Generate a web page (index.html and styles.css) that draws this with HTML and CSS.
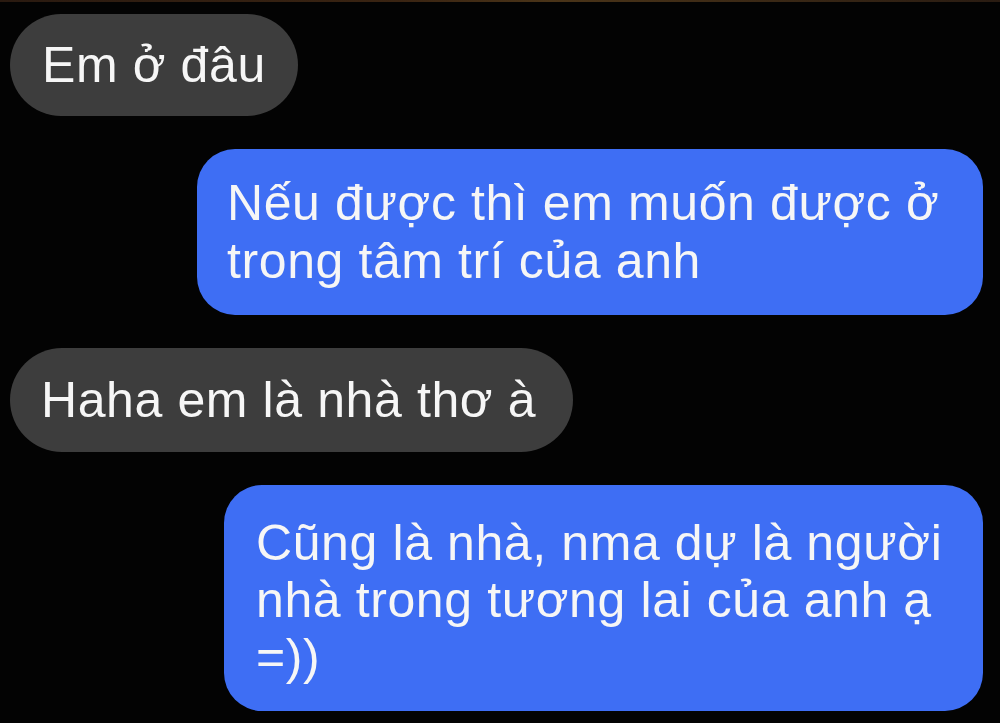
FILE: index.html
```html
<!DOCTYPE html>
<html lang="vi">
<head>
<meta charset="utf-8">
<title>Chat</title>
<link rel="stylesheet" href="styles.css">
</head>
<body>
<div class="topline"></div>
<main class="thread">
  <div class="bubble bubble--in bubble--short">Em ở đâu</div>
  <div class="bubble bubble--out bubble--w1">Nếu được thì em muốn được ở<br>trong tâm trí của anh</div>
  <div class="bubble bubble--in bubble--short2">Haha em là nhà thơ à</div>
  <div class="bubble bubble--out bubble--w2">Cũng là nhà, nma dự là người<br>nhà trong tương lai của anh ạ<br>=))</div>
</main>
</body>
</html>
```
FILE: styles.css
```css
html, body {
  margin: 0;
  padding: 0;
  background: #030303;
  height: 100%;
  overflow: hidden;
}

.topline {
  height: 2px;
  background: linear-gradient(90deg, #2a1a10, #3a2412 40%, #4a3418 55%, #2a1c12 100%);
}

.thread {
  display: flex;
  flex-direction: column;
  gap: 33px;
  padding: 12px 17px 0 10px;
  font-family: "Liberation Sans", Arial, sans-serif;
  font-size: 50px;
  line-height: 58px;
  letter-spacing: 0.6px;
  color: #f6f6f6;
}

.bubble {
  box-sizing: border-box;
  white-space: nowrap;
}

.bubble--in {
  align-self: flex-start;
  background: #3d3d3d;
  border-radius: 52px;
  padding: 22px 32px 22px 32px;
}

.bubble--short2 {
  padding: 23px 37px 23px 31px;
}

.bubble--out {
  align-self: flex-end;
  background: #3e6ef4;
  border-radius: 38px;
  padding: 25px 30px 25px 30px;
}

.bubble--w1 {
  width: 786px;
}

.bubble--w2 {
  width: 759px;
  padding: 30px 30px 25px 32px;
  line-height: 57px;
}
```
